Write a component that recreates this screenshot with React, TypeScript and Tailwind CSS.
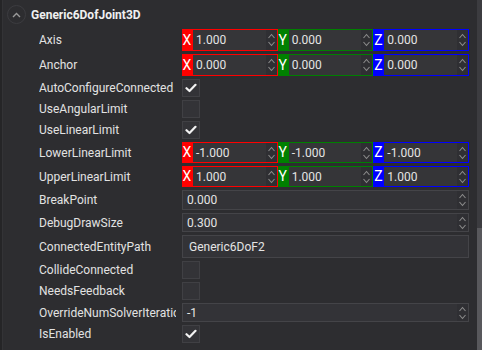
import React from "react";

const font = { fontFamily: "Roboto, 'Noto Sans', sans-serif" };

function Spinner() {
  return (
    <div className="flex h-full w-[11px] shrink-0 items-center justify-center bg-[#2f2f33]">
      <svg width="9" height="16" viewBox="0 0 9 16" fill="none">
        <polyline points="1.5,6 4.5,2.5 7.5,6" stroke="#8c8c8c" strokeWidth="1.1" />
        <polyline points="1.5,10 4.5,13.5 7.5,10" stroke="#8c8c8c" strokeWidth="1.1" />
      </svg>
    </div>
  );
}

function Check() {
  return (
    <svg width="12" height="10" viewBox="0 0 12 10" fill="none">
      <polyline points="1.5,5.2 4.5,8 10.5,1.8" stroke="#f2f2f2" strokeWidth="2.2" strokeLinecap="round" strokeLinejoin="round" />
    </svg>
  );
}

function Checkbox({ checked }: { checked: boolean }) {
  return (
    <div className="flex h-[18px] w-[18px] items-center justify-center border border-[#404044] bg-[#333337]">
      {checked && <Check />}
    </div>
  );
}

function VecField({ letter, value, color }: { letter: string; value: string; color: "x" | "y" | "z" }) {
  const lab =
    color === "x" ? "bg-[#ff0000]" : color === "y" ? "bg-[#008000]" : "bg-[#0000ff]";
  const brd =
    color === "x" ? "border-[#ff0000]" : color === "y" ? "border-[#008000]" : "border-[#0000ff]";
  return (
    <div className="flex h-full min-w-0 flex-1">
      <div className={`flex w-[10px] shrink-0 items-center justify-center text-[14px] text-white ${lab}`}>
        {letter}
      </div>
      <div className={`flex min-w-0 flex-1 items-center border ${brd} bg-[#353538]`}>
        <div className="flex-1 pl-[3px] text-[12px] text-[#e4e4e4]">{value}</div>
        <Spinner />
      </div>
    </div>
  );
}

function Row({ label, h, children }: { label: string; h: string; children: React.ReactNode }) {
  return (
    <div className={`flex items-center pl-[36px] ${h}`}>
      <div className="w-[137px] shrink-0 overflow-hidden whitespace-nowrap text-[12px] text-[#e2e2e2]">
        {label}
      </div>
      <div className="ml-[6px] flex h-full w-[287px] items-center">{children}</div>
    </div>
  );
}

function Vec({ label, v, h }: { label: string; v: [string, string, string]; h: string }) {
  return (
    <Row label={label} h={h}>
      <div className="flex h-full w-full">
        <VecField letter="X" value={v[0]} color="x" />
        <VecField letter="Y" value={v[1]} color="y" />
        <VecField letter="Z" value={v[2]} color="z" />
      </div>
    </Row>
  );
}

function Num({ label, value, h }: { label: string; value: string; h: string }) {
  return (
    <Row label={label} h={h}>
      <div className="flex h-full w-full items-center border border-[#444448] bg-[#333337]">
        <div className="flex-1 pl-[4px] text-[12px] text-[#e4e4e4]">{value}</div>
        <Spinner />
      </div>
    </Row>
  );
}

function Cb({ label, checked }: { label: string; checked: boolean }) {
  return (
    <Row label={label} h="h-[18px]">
      <Checkbox checked={checked} />
    </Row>
  );
}

export default function App() {
  return (
    <div className="flex h-[350px] w-[482px] overflow-hidden bg-[#2d2d30]" style={font}>
      <div className="w-[3px] shrink-0 border-r border-[#333336] bg-[#252527]" />
      <div className="flex min-w-0 flex-1 flex-col">
        <div className="flex h-[29px] shrink-0 items-center pl-[4px]">
          <div className="flex h-[19px] w-[19px] items-center justify-center rounded-full border border-[#3c3c40]">
            <svg width="9" height="6" viewBox="0 0 9 6" fill="none">
              <polyline points="1,5 4.5,1.5 8,5" stroke="#9a9a9a" strokeWidth="1.4" />
            </svg>
          </div>
          <div className="ml-[5px] text-[12px] font-bold text-[#f0f0f0]">Generic6DofJoint3D</div>
        </div>
        <div className="flex flex-col gap-[3px]">
          <Vec label="Axis" v={["1.000", "0.000", "0.000"]} h="h-[22px]" />
          <Vec label="Anchor" v={["0.000", "0.000", "0.000"]} h="h-[22px]" />
          <Cb label="AutoConfigureConnected" checked />
          <Cb label="UseAngularLimit" checked={false} />
          <Cb label="UseLinearLimit" checked />
          <Vec label="LowerLinearLimit" v={["-1.000", "-1.000", "-1.000"]} h="h-[21px]" />
          <Vec label="UpperLinearLimit" v={["1.000", "1.000", "1.000"]} h="h-[21px]" />
          <Num label="BreakPoint" value="0.000" h="h-[20px]" />
          <Num label="DebugDrawSize" value="0.300" h="h-[19px]" />
          <Row label="ConnectedEntityPath" h="h-[23px]">
            <div className="flex h-full w-full items-center border border-[#444448] bg-[#333337] pl-[6px] text-[12px] text-[#e4e4e4]">
              Generic6DoF2
            </div>
          </Row>
          <Cb label="CollideConnected" checked={false} />
          <Cb label="NeedsFeedback" checked={false} />
          <Num label="OverrideNumSolverIterations" value="-1" h="h-[19px]" />
          <Cb label="IsEnabled" checked />
        </div>
      </div>
      <div className="flex w-[5px] shrink-0 flex-col bg-[#3c3c40]">
        <div className="h-[228px]" />
        <div className="flex-1 bg-[#58585c]" />
      </div>
    </div>
  );
}
